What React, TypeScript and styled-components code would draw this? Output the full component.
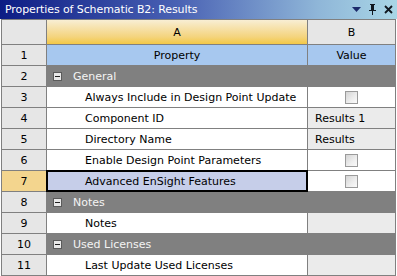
import React from "react";
import styled, { createGlobalStyle, css } from "styled-components";

const Global = createGlobalStyle`
  html, body { margin: 0; padding: 0; background: #ffffff; }
  body { font-family: "DejaVu Sans", Verdana, sans-serif; }
`;

const Panel = styled.div`
  width: 397px;
  height: 276px;
  display: flex;
  flex-direction: column;
  background: #ffffff;
  overflow: hidden;
`;

const TitleBar = styled.div`
  height: 19px;
  display: flex;
  align-items: center;
  justify-content: space-between;
  padding: 0 4px 0 5px;
  background: linear-gradient(90deg, #0c1c84 0%, #4a62b4 45%, #8fb6d8 80%, #a9d6e6 100%);
  color: #ffffff;
  font-size: 11px;
  letter-spacing: -0.1px;
`;

const TitleIcons = styled.div`
  display: flex;
  align-items: center;
  gap: 7px;
  color: #101840;
`;

const Grid = styled.div`
  display: grid;
  grid-template-columns: 44px 260px 87px;
  grid-template-rows: 24px repeat(11, 20px);
  gap: 1px;
  padding: 1px;
  background: #808080;
  width: 395px;
  box-sizing: border-box;
  margin-left: 1px;
  width: 395px;
  font-size: 11px;
  color: #000000;
`;

const NumCell = styled.div<{ $sel?: boolean }>`
  background: ${(p) => (p.$sel ? "#f3d58e" : "#e6e6e6")};
  display: flex;
  align-items: center;
  justify-content: center;
`;

const HeadCell = styled.div<{ $active?: boolean }>`
  display: flex;
  align-items: center;
  justify-content: center;
  background: ${(p) =>
    p.$active ? "linear-gradient(180deg, #f8eed4 0%, #f4d47e 70%, #f3c846 100%)" : "#e6e6e6"};
`;

const LabelCell = styled.div`
  background: #a7c8ef;
  display: flex;
  align-items: center;
  justify-content: center;
`;

const GroupCell = styled.div`
  grid-column: span 2;
  background: #808080;
  color: #f4f4f4;
  display: flex;
  align-items: center;
  padding-left: 6px;
  gap: 11px;
`;

const Toggle = styled.span`
  width: 7px;
  height: 7px;
  border: 1px solid #5a5a5a;
  background: #e8e8e8;
  display: flex;
  align-items: center;
  justify-content: center;
  &::after {
    content: "";
    width: 5px;
    height: 1px;
    background: #202020;
  }
`;

const PropCell = styled.div<{ $sel?: boolean }>`
  background: ${(p) => (p.$sel ? "#c6cee9" : "#ffffff")};
  display: flex;
  align-items: center;
  padding-left: 38px;
  white-space: nowrap;
  ${(p) =>
    p.$sel &&
    css`
      box-shadow: 0 0 0 1px #000000, inset 0 0 0 1px #000000;
      position: relative;
      z-index: 1;
    `}
`;

const ValueCell = styled.div<{ $filled?: boolean }>`
  background: ${(p) => (p.$filled ? "#ebebeb" : "#ffffff")};
  display: flex;
  align-items: center;
  padding-left: 7px;
`;

const CheckCell = styled.div`
  background: #ffffff;
  display: flex;
  align-items: center;
  justify-content: center;
`;

const Check = styled.span`
  width: 11px;
  height: 11px;
  border: 1px solid #9a9a9a;
  background: linear-gradient(135deg, #d4d4d4 0%, #eeeeee 60%, #fafafa 100%);
`;

type Row =
  | { kind: "group"; label: string }
  | { kind: "prop"; label: string; value?: string; check?: boolean; sel?: boolean };

const rows: Row[] = [
  { kind: "group", label: "General" },
  { kind: "prop", label: "Always Include in Design Point Update", check: true },
  { kind: "prop", label: "Component ID", value: "Results 1" },
  { kind: "prop", label: "Directory Name", value: "Results" },
  { kind: "prop", label: "Enable Design Point Parameters", check: true },
  { kind: "prop", label: "Advanced EnSight Features", check: true, sel: true },
  { kind: "group", label: "Notes" },
  { kind: "prop", label: "Notes", value: "" },
  { kind: "group", label: "Used Licenses" },
  { kind: "prop", label: "Last Update Used Licenses", value: "" },
];

export default function App() {
  return (
    <Panel>
      <Global />
      <TitleBar>
        <span>Properties of Schematic B2: Results</span>
        <TitleIcons>
          <svg width="9" height="5" viewBox="0 0 9 5">
            <path d="M0 0 H9 L4.5 5 Z" fill="#1c2a6a" />
          </svg>
          <svg width="9" height="11" viewBox="0 0 9 11">
            <path d="M2 0 H7 V1 H6 V6 H8 V7 H5 V11 H4 V7 H1 V6 H3 V1 H2 Z" fill="#101820" />
            <rect x="5" y="1" width="1" height="5" fill="#101820" />
          </svg>
          <svg width="9" height="9" viewBox="0 0 9 9">
            <path d="M1 1 L8 8 M8 1 L1 8" stroke="#101820" strokeWidth="1.8" />
          </svg>
        </TitleIcons>
      </TitleBar>
      <Grid>
        <NumCell />
        <HeadCell $active>A</HeadCell>
        <HeadCell>B</HeadCell>
        <NumCell>1</NumCell>
        <LabelCell>Property</LabelCell>
        <LabelCell>Value</LabelCell>
        {rows.map((r, i) => (
          <React.Fragment key={i}>
            <NumCell $sel={r.kind === "prop" && r.sel}>{i + 2}</NumCell>
            {r.kind === "group" ? (
              <GroupCell>
                <Toggle />
                {r.label}
              </GroupCell>
            ) : (
              <>
                <PropCell $sel={r.sel}>{r.label}</PropCell>
                {r.check ? (
                  <CheckCell>
                    <Check />
                  </CheckCell>
                ) : (
                  <ValueCell $filled>{r.value}</ValueCell>
                )}
              </>
            )}
          </React.Fragment>
        ))}
      </Grid>
    </Panel>
  );
}
